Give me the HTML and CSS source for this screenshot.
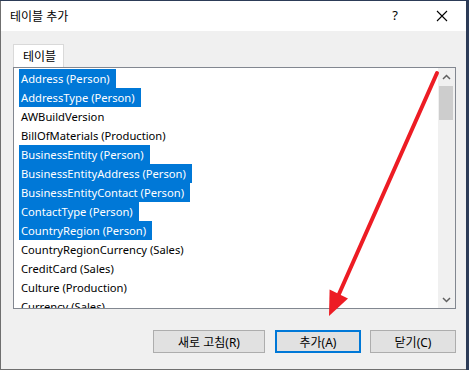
FILE: index.html
```
<!DOCTYPE html>
<html lang="ko">
<head>
    <meta charset="UTF-8">
    <title>테이블 추가</title>
    <link rel="stylesheet" href="styles.css">
</head>
<body>

<div class="desktop">
    <div class="window">
        <div class="titlebar">
            <span class="title">테이블 추가</span>
            <span class="help">?</span>
            <span class="close">
                <svg width="12" height="12" viewBox="0 0 12 12"><path d="M1 1 L11 11 M11 1 L1 11" stroke="#000" stroke-width="1.1" fill="none"/></svg>
            </span>
        </div>

        <div class="content">
            <div class="tabs">
                <div class="tab">테이블</div>
            </div>

            <div class="listbox">
                <ul class="items">
                    <li class="selected"><span>Address (Person)</span></li>
                    <li class="selected"><span>AddressType (Person)</span></li>
                    <li><span>AWBuildVersion</span></li>
                    <li><span>BillOfMaterials (Production)</span></li>
                    <li class="selected"><span>BusinessEntity (Person)</span></li>
                    <li class="selected"><span>BusinessEntityAddress (Person)</span></li>
                    <li class="selected"><span>BusinessEntityContact (Person)</span></li>
                    <li class="selected"><span>ContactType (Person)</span></li>
                    <li class="selected"><span>CountryRegion (Person)</span></li>
                    <li><span>CountryRegionCurrency (Sales)</span></li>
                    <li><span>CreditCard (Sales)</span></li>
                    <li><span>Culture (Production)</span></li>
                    <li><span>Currency (Sales)</span></li>
                </ul>
                <div class="scrollbar">
                    <div class="arrow-btn">
                        <svg width="9" height="6" viewBox="0 0 9 6"><path d="M1 5 L4.5 1.5 L8 5" stroke="#606060" stroke-width="1.5" fill="none"/></svg>
                    </div>
                    <div class="track">
                        <div class="thumb"></div>
                    </div>
                    <div class="arrow-btn">
                        <svg width="9" height="6" viewBox="0 0 9 6"><path d="M1 1 L4.5 4.5 L8 1" stroke="#606060" stroke-width="1.5" fill="none"/></svg>
                    </div>
                </div>
            </div>

            <div class="buttons">
                <button class="btn btn-wide">새로 고침(R)</button>
                <button class="btn btn-default">추가(A)</button>
                <button class="btn">닫기(C)</button>
            </div>
        </div>

        <!-- annotation arrow drawn over the dialog -->
        <svg class="annotation" width="469" height="370" viewBox="0 0 469 370">
            <line x1="437" y1="73" x2="339" y2="294" stroke="#ed1c24" stroke-width="4" stroke-linecap="round"/>
            <polygon points="329,316 329.6,289.5 348,298.5" fill="#ed1c24"/>
        </svg>
    </div>
</div>

</body>
</html>
```

FILE: styles.css
```
* {
    box-sizing: border-box;
}
body {
    margin: 0;
    width: 469px;
    height: 370px;
    overflow: hidden;
    background-color: #2c3b57;
    font-family: 'Noto Sans', 'Noto Sans CJK KR', sans-serif;
    font-size: 12px;
    color: #000;
}
.desktop {
    width: 469px;
    height: 370px;
    border-top: 1px solid #2c3b57;
    background: linear-gradient(to right, #7a7a7a 302px, #2c3b57 302px);
}
.window {
    width: 466px;
    height: 369px;
    border-left: 1px solid #6f6f6f;
    border-bottom: 1px solid #6f6f6f;
    background-color: #f0f0f0;
    display: flex;
    flex-direction: column;
    position: relative;
}
.titlebar {
    height: 30px;
    background-color: #ffffff;
    display: flex;
    align-items: center;
    padding-left: 9px;
}
.title {
    flex: 1;
    font-size: 12px;
    margin-top: -1px;
}
.help {
    font-size: 13px;
    margin-right: 38px;
    margin-top: -2px;
}
.close {
    display: flex;
    margin-right: 18px;
    margin-top: -1px;
}
.content {
    flex: 1;
    padding: 13px 10px 0 12px;
    display: flex;
    flex-direction: column;
}
.tabs {
    display: flex;
    height: 23px;
}
.tab {
    width: 51px;
    background-color: #ffffff;
    border: 1px solid #d9d9d9;
    border-bottom: none;
    padding-left: 9px;
    padding-top: 2px;
    font-size: 12px;
}
.listbox {
    height: 242px;
    background-color: #ffffff;
    border: 1px solid #828790;
    display: flex;
    overflow: hidden;
}
.items {
    list-style: none;
    margin: 0;
    padding: 1px 0 0 5px;
    flex: 1;
    font-size: 11.2px;
}
.items li {
    height: 19px;
    line-height: 19px;
    white-space: nowrap;
}
.items li span {
    display: inline-block;
    padding: 0 6px 0 2px;
    height: 19px;
}
.items li.selected span {
    background-color: #0078d7;
    color: #ffffff;
}
.scrollbar {
    width: 17px;
    background-color: #f0f0f0;
    display: flex;
    flex-direction: column;
}
.arrow-btn {
    height: 17px;
    display: flex;
    align-items: center;
    justify-content: center;
}
.track {
    flex: 1;
    padding: 1px 2px 0 1px;
}
.thumb {
    height: 34px;
    background-color: #cdcdcd;
}
.buttons {
    display: flex;
    justify-content: flex-end;
    margin-top: 21px;
}
.btn {
    height: 23px;
    width: 86px;
    margin-left: 9px;
    padding: 0;
    background-color: #e1e1e1;
    border: 1px solid #adadad;
    font-family: 'Noto Sans', 'Noto Sans CJK KR', sans-serif;
    font-size: 12px;
    color: #000;
}
.btn-wide {
    width: 112px;
    margin-left: 0;
}
.btn-default {
    margin-left: 10px;
    border: 2px solid #0078d7;
}
.annotation {
    position: absolute;
    left: -1px;
    top: -1px;
    pointer-events: none;
}
```
